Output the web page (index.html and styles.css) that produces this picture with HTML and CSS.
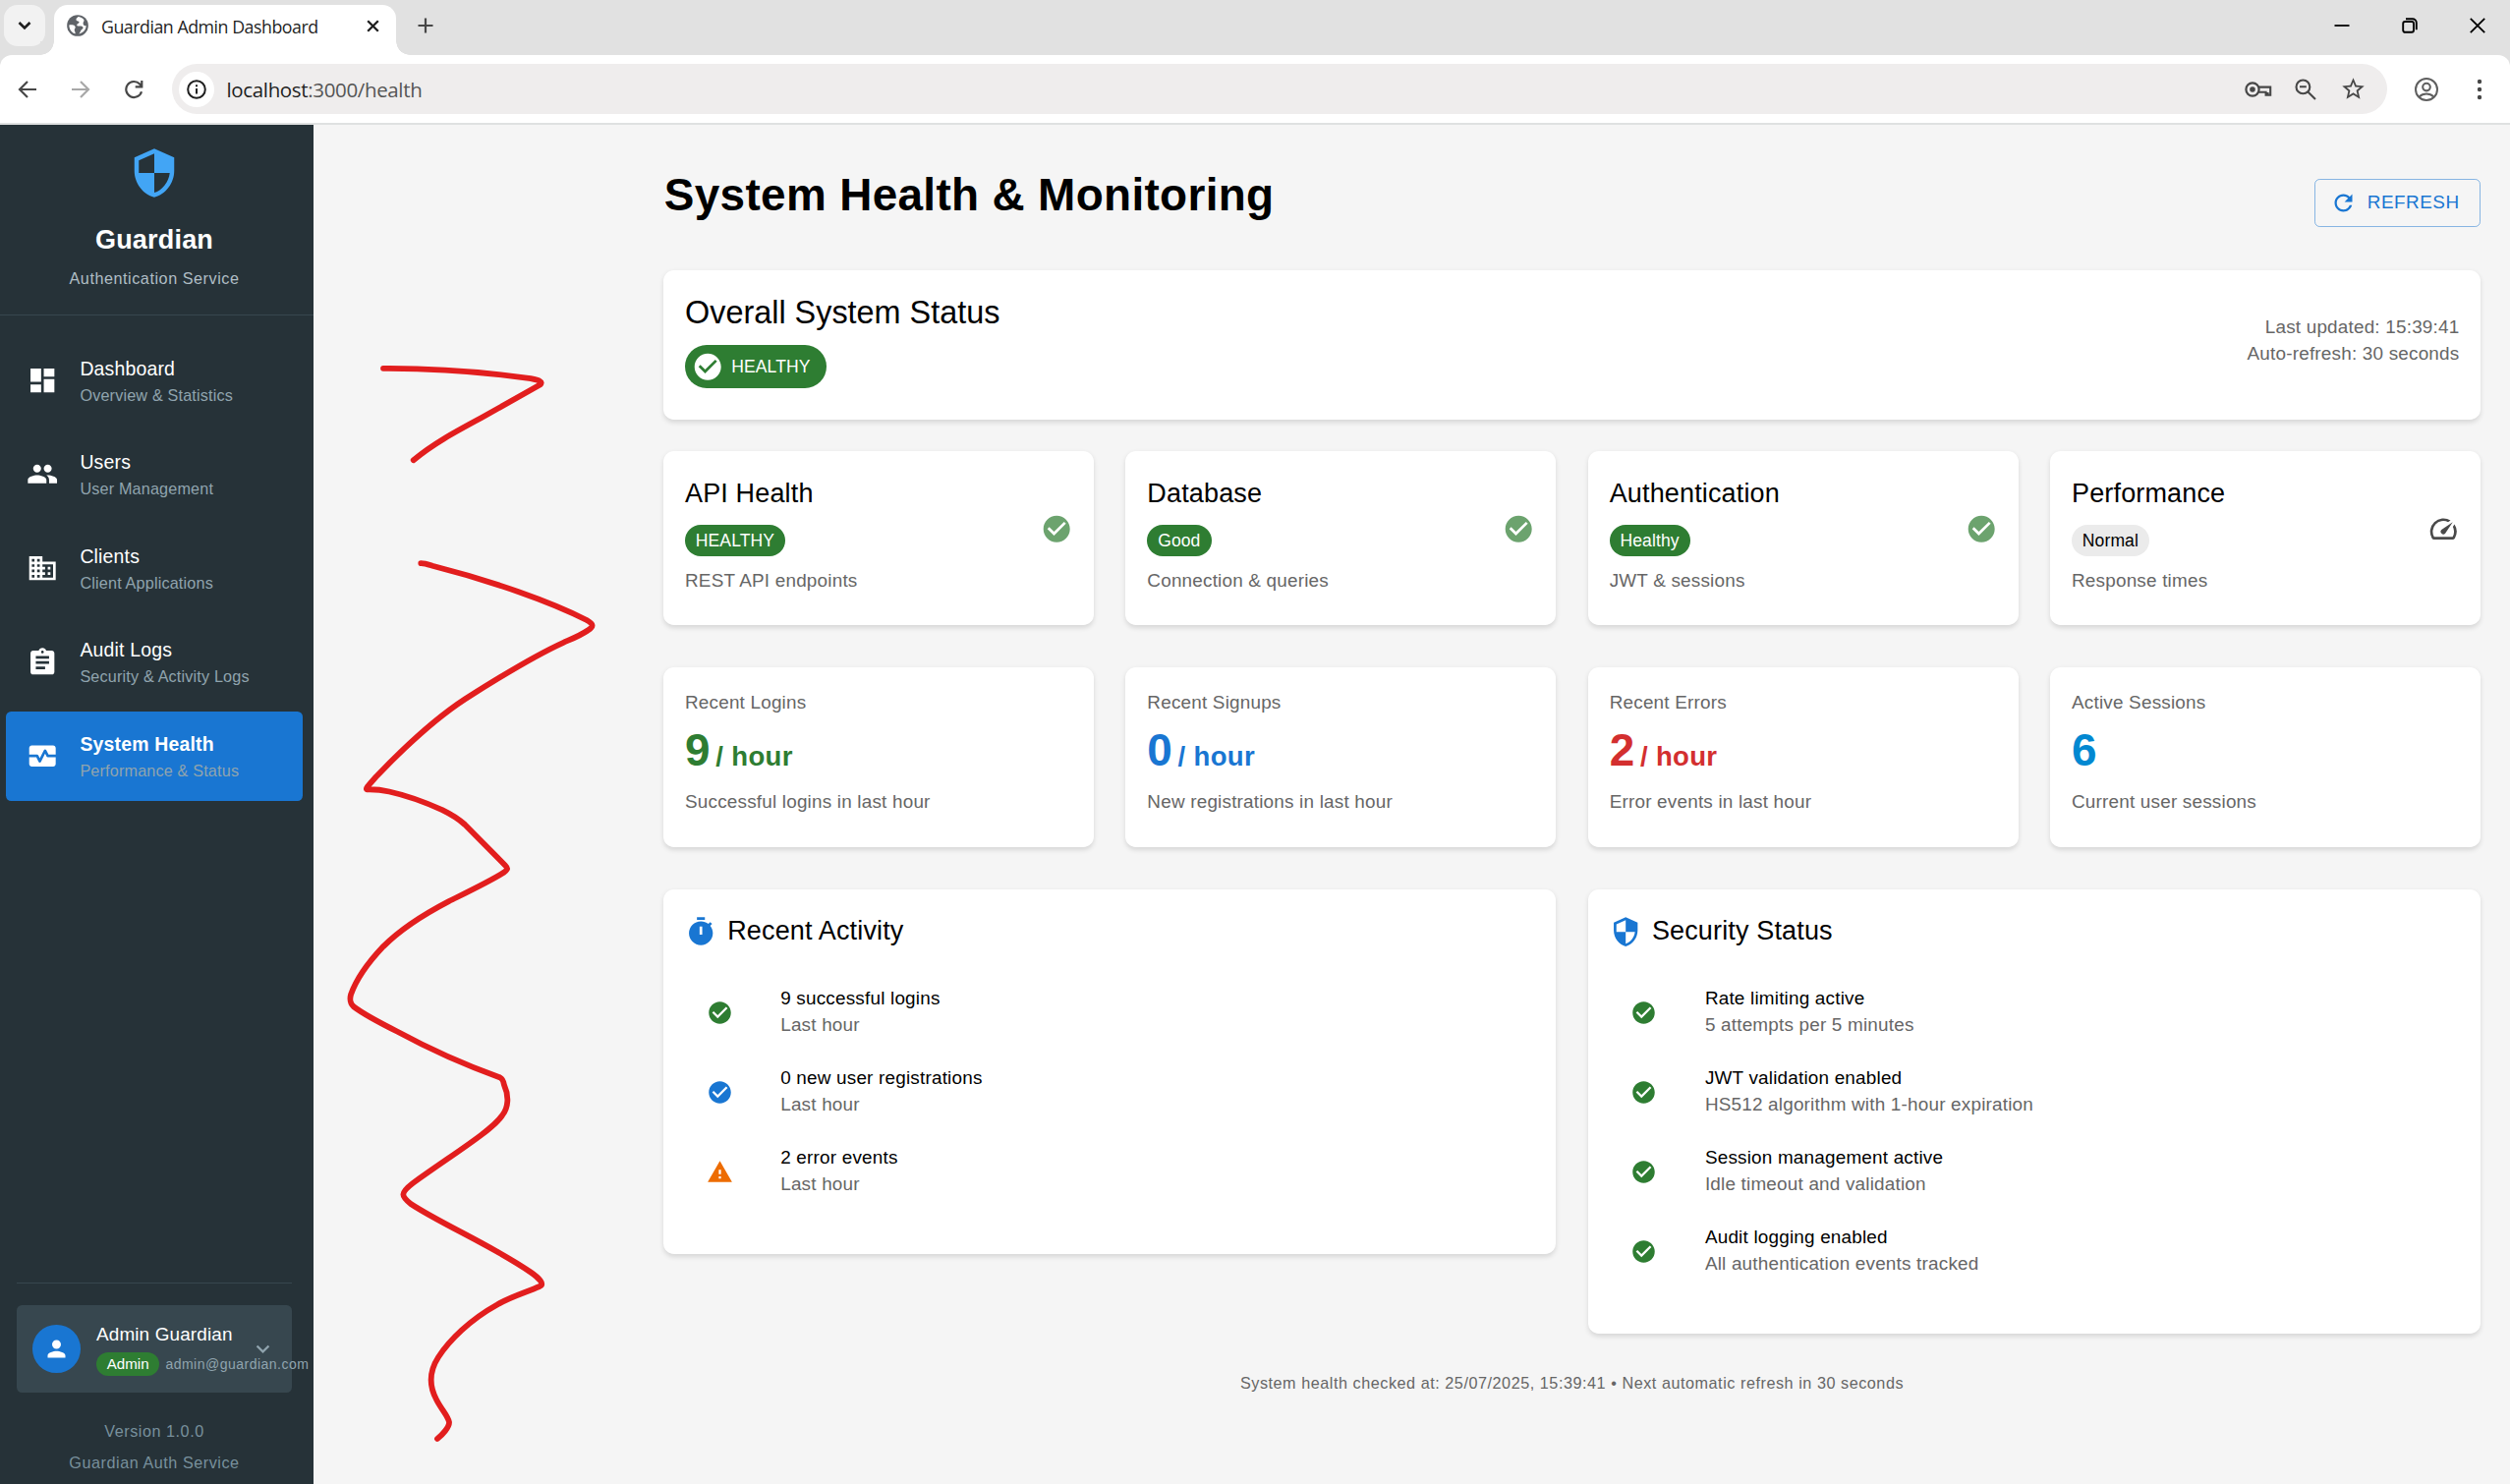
FILE: index.html
```html
<!DOCTYPE html>
<html lang="en">
<head>
<meta charset="utf-8">
<title>Guardian Admin Dashboard</title>
<link rel="stylesheet" href="styles.css">
</head>
<body>
<svg class="sprite" width="0" height="0" aria-hidden="true">
  <symbol id="security" viewBox="0 0 24 24"><path d="M12 1 3 5v6c0 5.55 3.84 10.74 9 12 5.16-1.26 9-6.45 9-12V5l-9-4zm0 10.99h7c-.53 4.12-3.28 7.79-7 8.94V12H5V6.3l7-3.11v8.8z"/></symbol>
  <symbol id="dashboard" viewBox="0 0 24 24"><path d="M3 13h8V3H3v10zm0 8h8v-6H3v6zm10 0h8V11h-8v10zm0-18v6h8V3h-8z"/></symbol>
  <symbol id="people" viewBox="0 0 24 24"><path d="M16 11c1.66 0 2.99-1.34 2.99-3S17.66 5 16 5c-1.66 0-3 1.34-3 3s1.34 3 3 3zm-8 0c1.66 0 2.99-1.34 2.99-3S9.66 5 8 5C6.34 5 5 6.34 5 8s1.34 3 3 3zm0 2c-2.33 0-7 1.17-7 3.5V19h14v-2.5c0-2.33-4.67-3.5-7-3.5zm8 0c-.29 0-.62.02-.97.05 1.16.84 1.97 1.97 1.97 3.45V19h6v-2.5c0-2.33-4.67-3.5-7-3.5z"/></symbol>
  <symbol id="business" viewBox="0 0 24 24"><path d="M12 7V3H2v18h20V7H12zM6 19H4v-2h2v2zm0-4H4v-2h2v2zm0-4H4V9h2v2zm0-4H4V5h2v2zm4 12H8v-2h2v2zm0-4H8v-2h2v2zm0-4H8V9h2v2zm0-4H8V5h2v2zm10 12h-8v-2h2v-2h-2v-2h2v-2h-2V9h8v10zm-2-8h-2v2h2v-2zm0 4h-2v2h2v-2z"/></symbol>
  <symbol id="assignment" viewBox="0 0 24 24"><path d="M19 3h-4.18C14.4 1.84 13.3 1 12 1c-1.3 0-2.4.84-2.82 2H5c-1.1 0-2 .9-2 2v14c0 1.1.9 2 2 2h14c1.1 0 2-.9 2-2V5c0-1.1-.9-2-2-2zm-7 0c.55 0 1 .45 1 1s-.45 1-1 1-1-.45-1-1 .45-1 1-1zm2 14H7v-2h7v2zm3-4H7v-2h10v2zm0-4H7V7h10v2z"/></symbol>
  <symbol id="monitor" viewBox="0 0 24 24"><path d="M15.11 12.45 14 10.24l-3.11 6.21c-.16.34-.51.55-.89.55s-.73-.21-.89-.55L7.38 13H2v5c0 1.1.9 2 2 2h16c1.1 0 2-.9 2-2v-5h-6c-.38 0-.73-.21-.89-.55z"/><path d="M20 4H4c-1.1 0-2 .9-2 2v5h6c.38 0 .73.21.89.55L10 13.76l3.11-6.21c.34-.68 1.45-.68 1.79 0L16.62 11H22V6c0-1.1-.9-2-2-2z"/></symbol>
  <symbol id="check" viewBox="0 0 24 24"><path d="M12 2C6.48 2 2 6.48 2 12s4.48 10 10 10 10-4.48 10-10S17.52 2 12 2zm-2 15-5-5 1.41-1.41L10 14.17l7.59-7.59L19 8l-9 9z"/></symbol>
  <symbol id="warning" viewBox="0 0 24 24"><path d="M1 21h22L12 2 1 21zm12-3h-2v-2h2v2zm0-4h-2v-4h2v4z"/></symbol>
  <symbol id="timer" viewBox="0 0 24 24"><path d="M9 1h6v2H9z"/><path d="m19.03 7.39 1.42-1.42c-.43-.51-.9-.99-1.41-1.41l-1.42 1.42C16.07 4.74 14.12 4 12 4c-4.97 0-9 4.03-9 9s4.02 9 9 9 9-4.03 9-9c0-2.12-.74-4.07-1.97-5.61zM13 14h-2V8h2v6z"/></symbol>
  <symbol id="speed" viewBox="0 0 24 24"><path d="m20.38 8.57-1.23 1.85a8 8 0 0 1-.22 7.58H5.07A8 8 0 0 1 15.58 6.85l1.85-1.23A10 10 0 0 0 3.35 19a2 2 0 0 0 1.72 1h13.85a2 2 0 0 0 1.74-1 10 10 0 0 0-.27-10.44z"/><path d="M10.59 15.41a2 2 0 0 0 2.83 0l5.66-8.49-8.49 5.66a2 2 0 0 0 0 2.83z"/></symbol>
  <symbol id="refresh" viewBox="0 0 24 24"><path d="M17.65 6.35C16.2 4.9 14.21 4 12 4c-4.42 0-7.99 3.58-7.99 8s3.57 8 7.99 8c3.73 0 6.84-2.55 7.73-6h-2.08c-.82 2.33-3.04 4-5.65 4-3.31 0-6-2.69-6-6s2.69-6 6-6c1.66 0 3.14.69 4.22 1.78L13 11h7V4l-2.35 2.35z"/></symbol>
  <symbol id="person" viewBox="0 0 24 24"><path d="M12 12c2.21 0 4-1.79 4-4s-1.79-4-4-4-4 1.79-4 4 1.79 4 4 4zm0 2c-2.67 0-8 1.34-8 4v2h16v-2c0-2.66-5.33-4-8-4z"/></symbol>
  <symbol id="expand" viewBox="0 0 24 24"><path d="M16.59 8.59 12 13.17 7.41 8.59 6 10l6 6 6-6z"/></symbol>
  <symbol id="globe" viewBox="0 0 24 24"><circle cx="12" cy="12" r="10"/><path class="land" d="M12.600 3.800C11 5 10.200 6 10.800 7.200c.8.8 2.200.4 2.600 1.400.3 1.200-1.200 1.500-1.900 2.200-.7.900.2 1.800 1.400 1.700 1.700-.2 3.300-.3 4 .9.600 1-.1 1.700-1 2.300-1.200.8-1.300 2.500-2.700 4.100 3.900-.8 6.800-3.900 6.800-7.800-1 .6-1.900.2-2.500-.8-.6-1.100-.3-2.300.4-3.300.4-.7-.1-1.700-1-2.300-1.100-.8-2.600-1.600-4.300-1.800zM4 11.500c1.800-.3 4.300-.2 5.400.9 1 1.100.2 2.200-.3 3.100-.6 1.200.7 1.800.8 4.200C6.400 18.800 4 15.500 4 11.500z"/></symbol>
  <symbol id="star" viewBox="0 0 24 24"><path d="M22 9.24l-7.190-.62L12 2 9.190 8.63 2 9.240l5.460 4.730L5.820 21 12 17.270 18.180 21l-1.630-7.030L22 9.240zM12 15.400l-3.760 2.270 1-4.280-3.320-2.880 4.380-.38L12 6.100l1.710 4.040 4.380.38-3.320 2.880 1 4.280L12 15.400z"/></symbol>
</svg>

<header class="chrome">
  <div class="tabstrip">
    <div class="tab-search"><svg width="14" height="10" viewBox="0 0 14 10" class="line dark"><path d="M1.5 2 7 7.5 12.5 2" stroke-width="2.6"/></svg></div>
    <div class="tab">
      <svg class="favicon"><use href="#globe"/></svg>
      <span class="tab-title">Guardian Admin Dashboard</span>
      <svg width="13" height="13" viewBox="0 0 13 13" class="line dark"><path d="M1.2 1.2l10.6 10.6M11.8 1.2 1.2 11.8" stroke-width="2.3"/></svg>
    </div>
    <svg width="16" height="16" viewBox="0 0 16 16" class="line grey new-tab"><path d="M8 .5v15M.5 8h15" stroke-width="2.2"/></svg>
    <div class="window-controls">
      <svg width="16" height="16" viewBox="0 0 16 16" class="line black"><path d="M.5 8h15" stroke-width="1.8"/></svg>
      <svg width="16" height="16" viewBox="0 0 16 16" class="line black"><rect x="1.2" y="4" width="10.8" height="10.8" rx="2" stroke-width="1.9"/><path d="M4 1.3h6.8a4 4 0 0 1 4 4v7" stroke-width="1.9"/></svg>
      <svg width="16" height="16" viewBox="0 0 16 16" class="line black"><path d="M.8.8l14.4 14.4M15.2.8.8 15.2" stroke-width="1.8"/></svg>
    </div>
  </div>
  <div class="toolbar">
    <div class="nav-buttons">
      <svg width="20" height="20" viewBox="0 0 20 20" class="line grey"><path d="M19 10H2M10 2l-8 8 8 8" stroke-width="2.2"/></svg>
      <svg width="20" height="20" viewBox="0 0 20 20" class="line light"><path d="M1 10h17M10 2l8 8-8 8" stroke-width="2.2"/></svg>
      <svg width="20" height="20" viewBox="0 0 20 20" class="line grey"><path d="M18 12.2A8 8 0 1 1 16.2 4.6L18.3 7M18.3 1v6.4h-6.6" stroke-width="2.2"/></svg>
    </div>
    <div class="omnibox">
      <div class="site-info"><svg width="22" height="22" viewBox="0 0 22 22" class="line dark"><circle cx="11" cy="11" r="8.8" stroke-width="2"/><path d="M11 10v5.4M11 6.2v2" stroke-width="2"/></svg></div>
      <span class="url">localhost<span class="url-rest">:3000/health</span></span>
      <div class="omnibox-actions">
        <svg width="28" height="20" viewBox="0 0 28 20" class="line grey"><circle cx="8" cy="10" r="6.6" stroke-width="2.2"/><circle cx="8" cy="10" r="2.8" class="solid" stroke="none"/><path d="M14.2 7.6h12v8.2h-4.6v-3h-7.4M23.6 15v-2" stroke-width="2.1"/></svg>
        <svg width="22" height="22" viewBox="0 0 22 22" class="line grey"><circle cx="8.4" cy="8.4" r="6.9" stroke-width="2.1"/><path d="M13.4 13.4l7.6 7.6M5 8.2h6.8" stroke-width="2.1"/></svg>
        <svg class="star"><use href="#star"/></svg>
      </div>
    </div>
    <svg width="24" height="24" viewBox="0 0 24 24" class="line mid profile"><circle cx="12" cy="12" r="11" stroke-width="2"/><circle cx="12" cy="9.6" r="3.8" stroke-width="2.1"/><path d="M4.6 19.6c4-4 10.8-4 14.8 0" stroke-width="2"/></svg>
    <svg width="6" height="22" viewBox="0 0 6 22" class="dots"><circle cx="3" cy="3" r="2.2"/><circle cx="3" cy="11" r="2.2"/><circle cx="3" cy="19" r="2.2"/></svg>
  </div>
</header>

<div class="app">
  <aside class="sidebar">
    <div class="brand">
      <svg class="brand-icon"><use href="#security"/></svg>
      <div class="brand-name">Guardian</div>
      <div class="brand-sub">Authentication Service</div>
    </div>
    <nav class="nav">
      <a class="nav-item"><svg><use href="#dashboard"/></svg><span><b>Dashboard</b><small>Overview &amp; Statistics</small></span></a>
      <a class="nav-item"><svg><use href="#people"/></svg><span><b>Users</b><small>User Management</small></span></a>
      <a class="nav-item"><svg><use href="#business"/></svg><span><b>Clients</b><small>Client Applications</small></span></a>
      <a class="nav-item"><svg><use href="#assignment"/></svg><span><b>Audit Logs</b><small>Security &amp; Activity Logs</small></span></a>
      <a class="nav-item active"><svg><use href="#monitor"/></svg><span><b>System Health</b><small>Performance &amp; Status</small></span></a>
    </nav>
    <div class="account">
      <div class="user">
        <div class="avatar"><svg><use href="#person"/></svg></div>
        <div class="user-info">
          <div class="user-name">Admin Guardian</div>
          <div class="user-meta"><span class="role">Admin</span><span class="email">admin@guardian.com</span></div>
        </div>
        <svg class="user-expand"><use href="#expand"/></svg>
      </div>
      <div class="version">Version 1.0.0</div>
      <div class="version">Guardian Auth Service</div>
    </div>
  </aside>

  <main class="main">
    <div class="page-head">
      <h1>System Health &amp; Monitoring</h1>
      <button class="refresh"><svg><use href="#refresh"/></svg>REFRESH</button>
    </div>

    <section class="card overall">
      <div>
        <h2>Overall System Status</h2>
        <span class="chip large"><svg><use href="#check"/></svg>HEALTHY</span>
      </div>
      <div class="updated">Last updated: 15:39:41<br>Auto-refresh: 30 seconds</div>
    </section>

    <section class="grid four">
      <div class="card service"><div><h3>API Health</h3><span class="chip">HEALTHY</span><p>REST API endpoints</p></div><svg class="ok"><use href="#check"/></svg></div>
      <div class="card service"><div><h3>Database</h3><span class="chip">Good</span><p>Connection &amp; queries</p></div><svg class="ok"><use href="#check"/></svg></div>
      <div class="card service"><div><h3>Authentication</h3><span class="chip">Healthy</span><p>JWT &amp; sessions</p></div><svg class="ok"><use href="#check"/></svg></div>
      <div class="card service"><div><h3>Performance</h3><span class="chip neutral">Normal</span><p>Response times</p></div><svg class="gauge"><use href="#speed"/></svg></div>
    </section>

    <section class="grid four">
      <div class="card metric"><p>Recent Logins</p><div class="value green">9<span>/ hour</span></div><p>Successful logins in last hour</p></div>
      <div class="card metric"><p>Recent Signups</p><div class="value blue">0<span>/ hour</span></div><p>New registrations in last hour</p></div>
      <div class="card metric"><p>Recent Errors</p><div class="value red">2<span>/ hour</span></div><p>Error events in last hour</p></div>
      <div class="card metric"><p>Active Sessions</p><div class="value cyan">6</div><p>Current user sessions</p></div>
    </section>

    <section class="grid two">
      <div class="card">
        <h3 class="list-head"><svg><use href="#timer"/></svg><span>Recent Activity</span></h3>
        <ul class="list">
          <li><svg class="green"><use href="#check"/></svg><div>9 successful logins<p>Last hour</p></div></li>
          <li><svg class="blue"><use href="#check"/></svg><div>0 new user registrations<p>Last hour</p></div></li>
          <li><svg class="orange"><use href="#warning"/></svg><div>2 error events<p>Last hour</p></div></li>
        </ul>
      </div>
      <div class="card">
        <h3 class="list-head"><svg><use href="#security"/></svg><span>Security Status</span></h3>
        <ul class="list">
          <li><svg class="green"><use href="#check"/></svg><div>Rate limiting active<p>5 attempts per 5 minutes</p></div></li>
          <li><svg class="green"><use href="#check"/></svg><div>JWT validation enabled<p>HS512 algorithm with 1-hour expiration</p></div></li>
          <li><svg class="green"><use href="#check"/></svg><div>Session management active<p>Idle timeout and validation</p></div></li>
          <li><svg class="green"><use href="#check"/></svg><div>Audit logging enabled<p>All authentication events tracked</p></div></li>
        </ul>
      </div>
    </section>

    <footer class="foot">System health checked at: 25/07/2025, 15:39:41 • Next automatic refresh in 30 seconds</footer>
  </main>
</div>

<svg class="marker" width="300" height="1140" viewBox="340 350 300 1140">
  <path d="M390 374.8C440 374.5 490 378 540 385.2C549 387 553 388.5 549.5 391.5L490 425C462 440 440 452 420.7 468.2"/>
  <path d="M428.3 573.1C432 573 436 574.5 440 575.8C500 591 560 612 597 631C604 635 604.5 637.5 598 641.5C590 647 582 650 573.3 653.8C540 669 505 691 473.3 711.2C440 733 405 767 383.3 789.7C376 798 371 803 373.5 803.3C383 803 387 803.5 396 805.5C412 809 432 816 450 824.1C460 829 466 832.5 473 839L514 880.5C517 883.5 517 884.5 513 887.5C500 896 475 908 456.7 917.1C430 931 408 945 390 963.1C374 980 362 998 357 1012C355.5 1018 356.5 1021 360 1024.4C370 1032 385 1040 405 1050C440 1069 480 1086 509 1096.5C512 1098 512.5 1101 513 1104C518 1115 517.5 1127 511 1135C500 1151 460 1175 420 1204C407 1214 408 1217 418 1225C450 1246 500 1267 540 1294.5C548 1300 555 1307 549 1309C535 1315 518 1320 506 1327.5C478 1343 457 1364 446 1381C437 1395 436 1409 444 1424C449 1434 456 1441 457 1447C457.5 1452 450 1460 445 1464"/>
</svg>
</body>
</html>
```
FILE: styles.css
```css
* { box-sizing: border-box; }
body {
  margin: 0;
  width: 2554px;
  height: 1510px;
  overflow: hidden;
  position: relative;
  display: flex;
  flex-direction: column;
  font-family: "Liberation Sans", Arial, sans-serif;
  font-size: 18.9px;
  line-height: 27px;
  color: #000;
  background: #f5f5f5;
}
svg { display: block; flex: none; fill: currentColor; }
.sprite { position: absolute; }
h1, h2, h3, p, ul { margin: 0; padding: 0; font-weight: 400; list-style: none; }

/* Browser frame */
.chrome { flex: none; height: 127px; background: #fff; border-bottom: 2px solid #dfe1e1; }
.line { fill: none; stroke: currentColor; }
.line .solid { fill: currentColor; }
.land { fill: #fff; }
.dark { color: #1f1f1f; }
.black { color: #000; }
.grey { color: #474747; }
.mid { color: #5f5f5f; }
.light { color: #a8a8a8; }
.tabstrip { height: 56px; background: #e1e1e1; display: flex; align-items: center; padding: 0 25px 4px 4px; }
.tab-search { width: 42px; height: 42px; border-radius: 14px; background: #f2f2f2; display: grid; place-items: center; }
.tab {
  position: relative;
  align-self: flex-start;
  width: 348px;
  height: 51px;
  margin: 5px 0 0 9px;
  padding: 0 17px 9px 11px;
  display: flex;
  align-items: center;
  background: #fff;
  border-radius: 14px 14px 0 0;
}
.tab::before, .tab::after { content: ""; position: absolute; bottom: 0; width: 14px; height: 14px; }
.tab::before { left: -14px; background: radial-gradient(circle at 0 0, #e1e1e1 13.5px, #fff 14px); }
.tab::after { right: -14px; background: radial-gradient(circle at 100% 0, #e1e1e1 13.5px, #fff 14px); }
.favicon { width: 26px; height: 26px; color: #5f6368; }
.tab-title { flex: 1; margin-left: 11px; padding-top: 2px; font: 17.8px "Open Sans", sans-serif; letter-spacing: -.48px; color: #1f1f1f; white-space: nowrap; }
.new-tab { margin-left: 22px; }
.window-controls { margin-left: auto; display: flex; gap: 53px; }
.toolbar { height: 69px; display: flex; align-items: center; padding: 0 28px 0 18px; background: linear-gradient(#e1e1e1 12px, #fff 12px); position: relative; }
.toolbar::before { content: ""; position: absolute; inset: 0; background: #fff; border-radius: 12px 12px 0 0; }
.toolbar > * { position: relative; }
.nav-buttons { display: flex; gap: 34px; }
.omnibox { flex: 1; height: 51px; margin-left: 29px; padding: 0 21.5px 0 7px; display: flex; align-items: center; background: #efeded; border-radius: 26px; }
.site-info { width: 36px; height: 36px; border-radius: 50%; background: #fff; display: grid; place-items: center; }
.url { margin-left: 12.5px; font: 20.5px "Open Sans", sans-serif; letter-spacing: -.35px; color: #1f1f1f; }
.url-rest { color: #555; }
.omnibox-actions { margin-left: auto; display: flex; align-items: center; gap: 23.5px; }
.star { width: 27px; height: 27px; color: #474747; }
.profile { margin: 0 39px 0 28px; }
.dots { color: #474747; }

/* Sidebar */
.app { flex: 1; display: flex; min-height: 0; }
.sidebar { width: 319px; flex: none; display: flex; flex-direction: column; background: #263238; color: #fff; }
.brand { height: 194px; padding: 22px 5px 0 0; border-bottom: 1.5px solid #37474f; display: flex; flex-direction: column; align-items: center; }
.brand-icon { width: 54px; height: 54px; color: #42a5f5; }
.brand-name { margin-top: 20px; font-size: 27px; font-weight: 700; letter-spacing: .2px; line-height: 43px; }
.brand-sub { margin-top: 4px; font-size: 16.2px; letter-spacing: .54px; color: #b0bec5; }
.nav { padding: 21px 11px 0 6px; display: flex; flex-direction: column; gap: 5.4px; }
.nav-item { height: 90.2px; padding-left: 21px; display: flex; align-items: center; gap: 22px; border-radius: 5.4px; }
.nav-item svg { width: 32.4px; height: 32.4px; }
.nav-item b { display: block; padding-top: 2px; font-weight: 400; font-size: 19.44px; letter-spacing: .18px; line-height: 27px; }
.nav-item small { display: block; font-size: 16.2px; letter-spacing: .17px; line-height: 26px; color: #90a4ae; }
.nav-item.active { background: #1976d2; }
.nav-item.active b { font-weight: 700; }
.account { margin: auto 22px 3px 17px; border-top: 1.5px solid #37474f; padding-top: 22px; }
.user { height: 89.5px; padding: 0 16px; margin-bottom: 26px; display: flex; align-items: center; border-radius: 5.4px; background: #37474f; }
.avatar { width: 48.6px; height: 48.6px; flex: none; border-radius: 50%; background: #1976d2; display: grid; place-items: center; }
.avatar svg { width: 27px; height: 27px; }
.user-info { width: 147px; margin-left: 16.4px; white-space: nowrap; }
.user-name { letter-spacing: .15px; margin-bottom: 5px; }
.user-meta { display: flex; align-items: center; gap: 6px; }
.role { height: 24.3px; padding: 0 10.8px; border-radius: 12.2px; background: #2e7d32; font-size: 15.12px; line-height: 24px; }
.email { font-size: 14.04px; letter-spacing: .47px; line-height: 24px; color: #90a4ae; }
.user-expand { width: 27px; height: 27px; margin-left: 9px; color: #90a4ae; }
.version { height: 32px; text-align: center; font-size: 16.2px; letter-spacing: .54px; line-height: 27px; color: #78909c; }

/* Content */
.main { flex: 1; padding: 42.8px 30px 0 356px; }
.page-head { height: 72.7px; display: flex; align-items: center; justify-content: space-between; }
h1 { font-size: 45.9px; font-weight: 700; letter-spacing: .337px; line-height: 56.7px; padding: 0 0 16px .8px; }
.refresh {
  height: 49px;
  width: 169px;
  padding: 0 20.2px 0 15px;
  display: flex;
  align-items: center;
  gap: 10.8px;
  font: 18.9px "Liberation Sans", Arial, sans-serif;
  letter-spacing: .5px;
  color: #1976d2;
  background: none;
  border: 1.35px solid rgba(25, 118, 210, .5);
  border-radius: 5.4px;
}
.refresh svg { width: 27px; height: 27px; }
.card { background: #fff; border-radius: 10.8px; padding: 21.6px 21.6px 32.4px 22px; box-shadow: 0 2.7px 5.4px rgba(0, 0, 0, .12); }
.grid { display: grid; column-gap: 32.4px; align-items: start; margin-bottom: 43px; }
.four { grid-template-columns: repeat(4, 1fr); }
.two { grid-template-columns: repeat(2, 1fr); margin-bottom: 37px; }
.overall { margin: 32.4px 0; display: flex; align-items: center; justify-content: space-between; }
h2 { font-size: 32.4px; line-height: 43.2px; padding-top: 1px; margin-bottom: 10.8px; }
h3 { font-size: 27px; line-height: 43.2px; letter-spacing: .15px; margin-bottom: 9.45px; }
p, .updated { color: #666; letter-spacing: .2px; }
.updated { text-align: right; padding-top: 1px; }
.chip { display: flex; align-items: center; width: fit-content; height: 32.4px; padding: 1px 11.2px 0 10.8px; border-radius: 22px; font-size: 17.55px; letter-spacing: .1px; color: #fff; background: #2e7d32; }
.chip.large { height: 43.2px; padding: 0 16.2px 0 6.75px; }
.chip svg { width: 32.4px; height: 32.4px; margin-right: 8.1px; }
.chip.neutral { background: #ebebeb; color: #000; }
.service { display: flex; align-items: center; justify-content: space-between; }
.service p { margin-top: 11px; }
.service > svg { width: 32.4px; height: 32.4px; margin-bottom: 8px; }
.ok { color: #2e7d32; opacity: .7; }
.gauge { color: #4a4a4a; }
.value { height: 57.7px; margin: 6.6px 0 10.4px; font-size: 45.9px; font-weight: 700; letter-spacing: .337px; line-height: 56.7px; }
.value + p { margin-top: -1px; padding-bottom: 1px; }
.value span { font-size: 27.54px; line-height: 1; margin-left: 5.4px; }
.green { color: #2e7d32; }
.blue { color: #1976d2; }
.red { color: #d32f2f; }
.cyan { color: #0288d1; }
.orange { color: #ed6c02; }
.list-head { display: flex; align-items: center; gap: 10.8px; }
.list-head svg { width: 32.4px; height: 32.4px; color: #1976d2; }
.list-head span { height: 43.2px; line-height: 41px; }
.list { padding: 10.8px 0; letter-spacing: .2px; }
.list li { height: 81px; padding-left: 21.6px; display: flex; align-items: center; gap: 48.6px; }
.list li div { padding-bottom: 2.4px; }
.list svg { width: 27px; height: 27px; }
.foot { text-align: center; font-size: 16.2px; letter-spacing: .54px; color: #666; }

/* Hand-drawn marker strokes over the page */
.marker { position: absolute; left: 340px; top: 350px; fill: none; stroke: #e21e1e; stroke-width: 5.8px; stroke-linecap: round; stroke-linejoin: round; }
```
